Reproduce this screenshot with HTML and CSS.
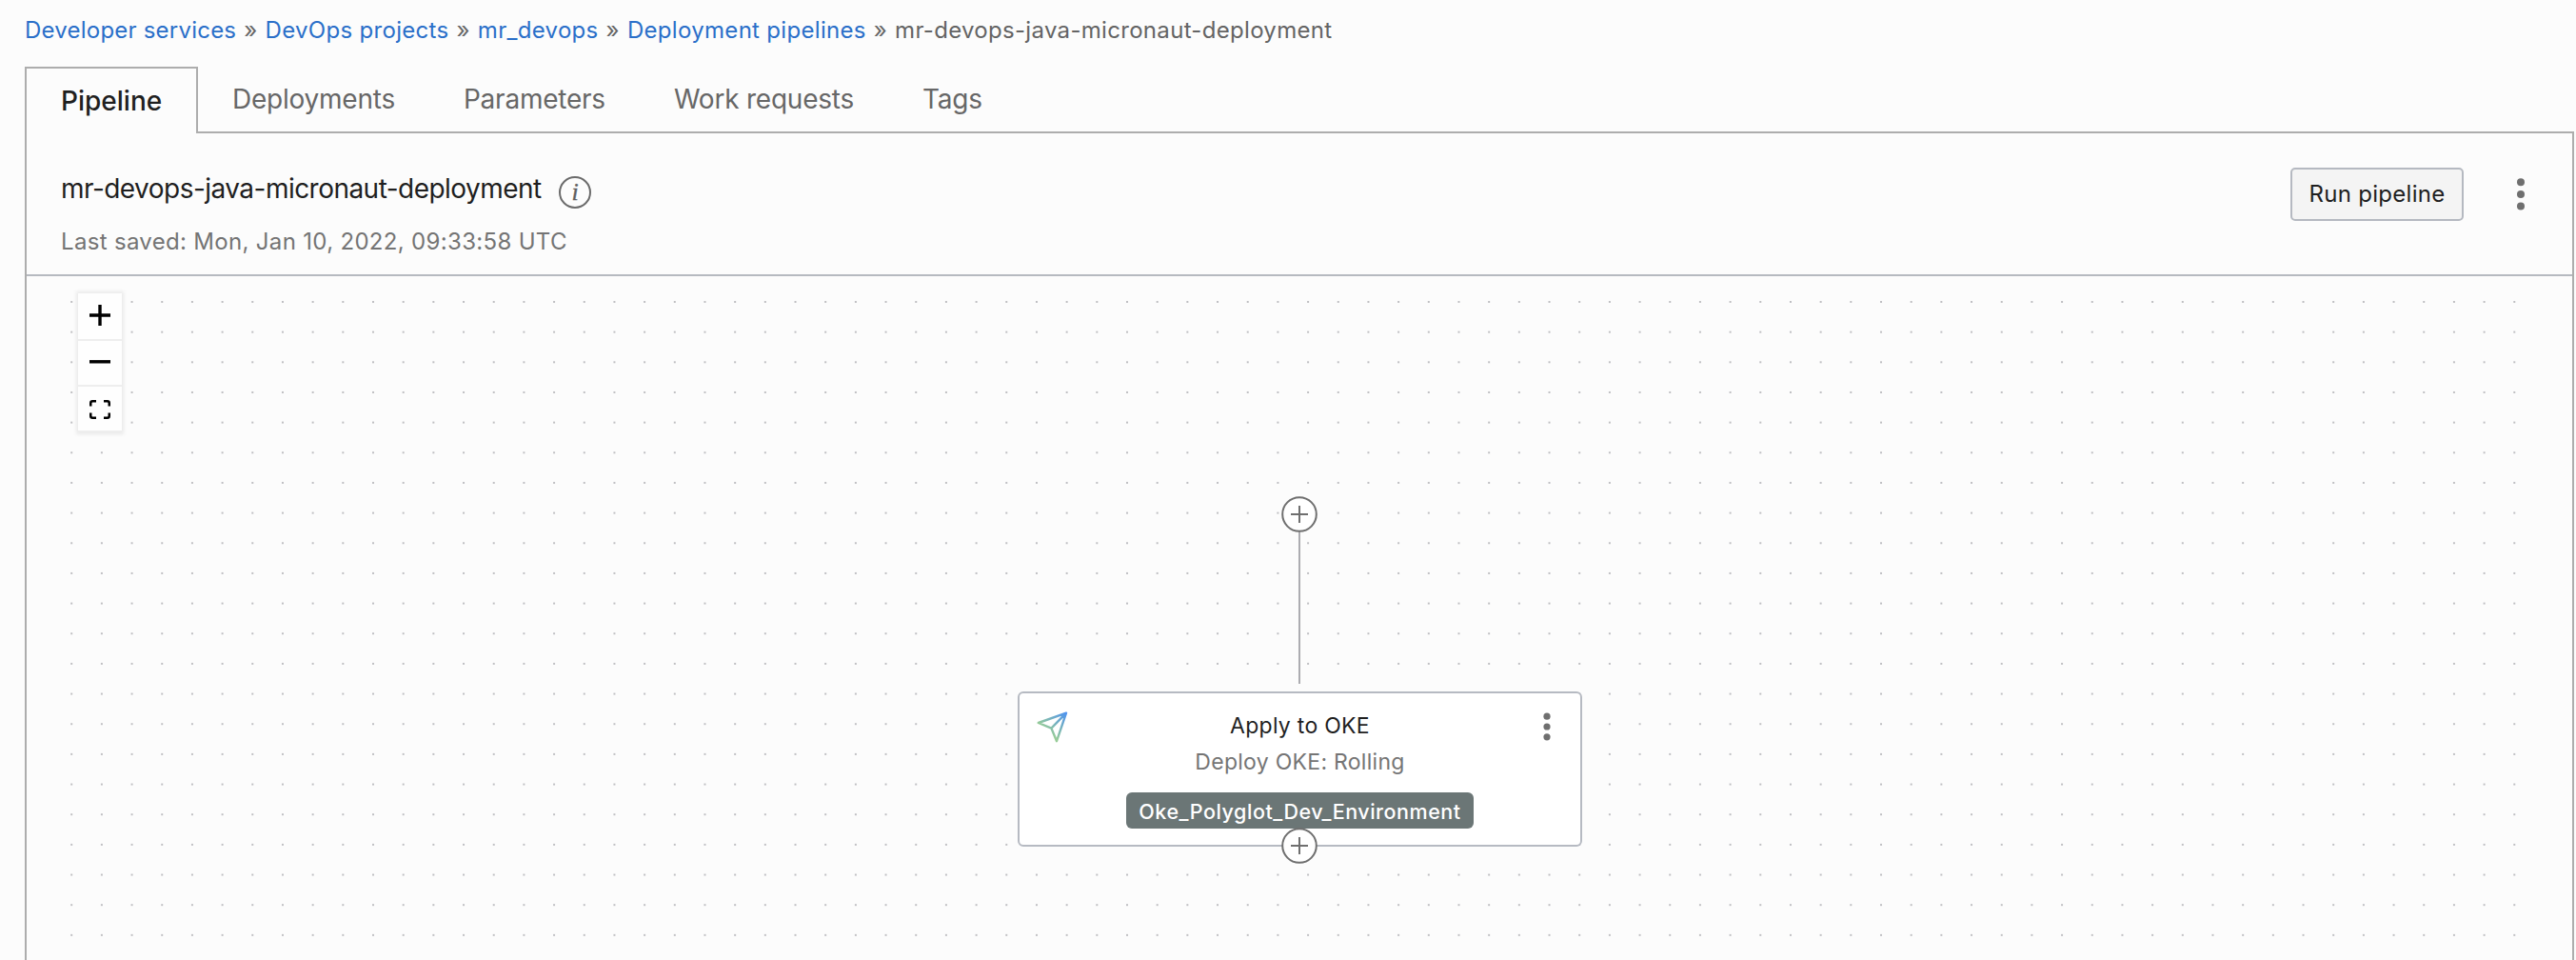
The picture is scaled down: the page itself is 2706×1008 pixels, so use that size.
FILE: index.html
```html
<!DOCTYPE html>
<html lang="en">
<head>
<meta charset="utf-8">
<title>mr-devops-java-micronaut-deployment</title>
<link rel="stylesheet" href="styles.css">
</head>
<body>
<nav class="breadcrumb">
  <a class="root">Developer services</a><span class="sep">»</span><a>DevOps projects</a><span class="sep">»</span><a>mr_devops</a><span class="sep">»</span><a>Deployment pipelines</a><span class="sep">»</span><span class="current">mr-devops-java-micronaut-deployment</span>
</nav>
<div class="tabs">
  <div class="tab active">Pipeline</div>
  <div class="tab">Deployments</div>
  <div class="tab">Parameters</div>
  <div class="tab">Work requests</div>
  <div class="tab">Tags</div>
</div>
<main class="panel">
  <header class="panel-header">
    <div class="heading">
      <div class="title-row">
        <h1>mr-devops-java-micronaut-deployment</h1>
        <svg class="info" width="36" height="36" viewBox="0 0 36 36"><circle cx="18" cy="18" r="16" fill="none" stroke="#6b6b6b" stroke-width="2"/><text x="18" y="25.5" text-anchor="middle" class="info-letter">i</text></svg>
      </div>
      <p class="saved">Last saved: Mon, Jan 10, 2022, 09:33:58 UTC</p>
    </div>
    <div class="actions">
      <button class="run">Run pipeline</button>
      <svg width="10" height="36" viewBox="0 0 10 36" fill="#6f6f6f"><circle cx="5" cy="5.2" r="4"/><circle cx="5" cy="18" r="4"/><circle cx="5" cy="30.6" r="4"/></svg>
    </div>
  </header>
  <section class="canvas">
    <svg class="dots" width="2588" height="718">
      <defs><pattern id="grid" x="-0.64" y="11.16" width="31.68" height="31.66" patternUnits="userSpaceOnUse"><circle cx="15.84" cy="15.84" r="1.05" fill="#b0b0b4"/></pattern></defs>
      <rect width="2588" height="718" fill="url(#grid)"/>
    </svg>
    <div class="controls">
      <div class="control zoom-in"><svg width="22" height="22" viewBox="0 0 22 22"><path d="M0 11h22M11 0v22" stroke="#000" stroke-width="3.4"/></svg></div>
      <div class="control zoom-out"><svg width="22" height="4" viewBox="0 0 22 4"><path d="M0 1.8h22" stroke="#000" stroke-width="3.4"/></svg></div>
      <div class="control fit"><svg width="22" height="20" viewBox="0 0 22 20" fill="none" stroke="#000" stroke-width="2.5"><path d="M1.25 6.5V3.2Q1.25 1.25 3.2 1.25H7M15 1.25h3.8q1.95 0 1.95 1.95v3.3M20.75 13.5v3.3q0 1.95-1.95 1.95H15M7 18.75H3.2q-1.95 0-1.95-1.95v-3.3"/></svg></div>
    </div>
    <div class="edge"></div>
    <div class="stage">
      <svg class="plane" width="34" height="34" viewBox="0 0 34 34"><defs><linearGradient id="sky" gradientUnits="userSpaceOnUse" x1="31" y1="3" x2="13" y2="24"><stop offset="0" stop-color="#4f93ee"/><stop offset="1" stop-color="#97cc97"/></linearGradient></defs><path d="M31 2.7 1.8 13 15.4 18.6 21 32.2ZM15.4 18.6 31 2.7" fill="none" stroke="url(#sky)" stroke-width="2.4" stroke-linejoin="round"/></svg>
      <div class="stage-body">
        <div class="stage-name">Apply to OKE</div>
        <div class="stage-kind">Deploy OKE: Rolling</div>
        <div class="badge">Oke_Polyglot_Dev_Environment</div>
      </div>
      <svg class="menu" width="8" height="30" viewBox="0 0 8 30" fill="#6f6f6f"><circle cx="4" cy="4.2" r="3.6"/><circle cx="4" cy="15" r="3.6"/><circle cx="4" cy="25.8" r="3.6"/></svg>
    </div>
    <svg class="add add-first" width="40" height="40" viewBox="0 0 40 40"><circle cx="20" cy="20" r="17.8" fill="#fff" stroke="#6f6f6f" stroke-width="2"/><path d="M11 20h18M20 11v18" stroke="#6f6f6f" stroke-width="2"/></svg>
    <svg class="add add-last" width="40" height="40" viewBox="0 0 40 40"><circle cx="20" cy="20" r="17.8" fill="#fff" stroke="#6f6f6f" stroke-width="2"/><path d="M11 20h18M20 11v18" stroke="#6f6f6f" stroke-width="2"/></svg>
  </section>
</main>
</body>
</html>
```
FILE: styles.css
```css
* { box-sizing: border-box; }
body {
  margin: 0;
  height: 1008px;
  overflow: hidden;
  display: flex;
  flex-direction: column;
  padding: 0 2px 0 26px;
  background: #fcfcfc;
  color: #1f1f1f;
  font-family: Inter, "Liberation Sans", sans-serif;
  font-size: 24px;
}
.breadcrumb {
  height: 70px;
  padding-top: 17px;
  line-height: 30px;
  letter-spacing: .31px;
  color: #646464;
  white-space: nowrap;
}
.breadcrumb a { color: #2a6fc9; }
.breadcrumb .root { letter-spacing: .22px; }
.sep { margin: 0 8px; }
.tabs { display: flex; height: 70px; position: relative; z-index: 1; margin-bottom: -2px; }
.tab {
  padding: 15px 36px 0;
  height: 68px;
  font-size: 28px;
  line-height: 38px;
  letter-spacing: -.23px;
  color: #676767;
  white-space: nowrap;
}
.tab.active {
  width: 182px;
  height: 70px;
  padding: 15px 34px 0 36px;
  border: 2px solid #adadad;
  border-bottom: 0;
  background: #fcfcfc;
  color: #1f1f1f;
  font-weight: 500;
  letter-spacing: 0;
}
.panel {
  flex: 1;
  display: flex;
  flex-direction: column;
  border: 2px solid #adadad;
  border-bottom: 0;
}
.panel-header {
  flex: none;
  height: 150px;
  display: flex;
  justify-content: space-between;
  padding: 36px 49px 0 36px;
  border-bottom: 2px solid #b6bac0;
}
.title-row { display: flex; gap: 17px; height: 54px; }
h1 {
  margin: 4px 0 0;
  font-size: 28px;
  font-weight: 400;
  line-height: 36px;
  letter-spacing: -.53px;
  white-space: nowrap;
}
.info { margin-top: 8px; }
.info-letter { font: italic 26px "Liberation Serif", serif; fill: #5f5f5f; stroke: #5f5f5f; stroke-width: .4px; }
.saved { margin: 9px 0 0; line-height: 30px; letter-spacing: .32px; color: #747474; }
.actions { display: flex; gap: 55px; height: 56px; align-items: center; }
.run {
  width: 182px;
  height: 56px;
  padding: 0 0 2px;
  border: 2px solid #b5b9c1;
  border-radius: 5px;
  background: #f4f4f4;
  color: #1f1f1f;
  font: 400 24px Inter, sans-serif;
  letter-spacing: .3px;
}
.canvas { position: relative; flex: 1; padding: 18px 0 0 54px; }
.dots { position: absolute; left: 32px; top: 0; }
.controls { position: relative; width: 46px; box-shadow: 0 0 4px 2px rgba(0,0,0,.08); }
.control {
  display: flex;
  align-items: center;
  justify-content: center;
  height: 48px;
  border-bottom: 2px solid #eee;
  background: #fefefe;
}
.zoom-in { height: 50px; padding-bottom: 2px; }
.zoom-out { padding-bottom: 2px; }
.fit { padding-top: 2px; }
.edge { position: absolute; left: 1336px; top: 268px; width: 2px; height: 160px; background: #acacb1; }
.stage {
  position: absolute;
  left: 1041px;
  top: 436px;
  width: 593px;
  height: 163px;
  display: grid;
  grid-template-columns: 1fr auto 1fr;
  align-items: start;
  padding: 0 18px;
  border: 2px solid #b6bac2;
  border-radius: 6px;
  background: #fff;
}
.plane { margin-top: 18px; }
.menu { margin: 20px 13px 0 0; justify-self: end; }
.stage-body {
  display: flex;
  flex-direction: column;
  align-items: center;
  padding-top: 17px;
  font-size: 23px;
  letter-spacing: .28px;
}
.stage-name { line-height: 34px; }
.stage-kind { margin-top: 4px; line-height: 34px; color: #757575; }
.badge {
  margin-top: 15px;
  height: 38px;
  padding: 0 13px;
  border-radius: 6px;
  background: #6b7676;
  color: #fff;
  font-size: 21.5px;
  font-weight: 500;
  line-height: 40px;
  letter-spacing: .53px;
  white-space: nowrap;
}
.add { position: absolute; left: 1316.5px; }
.add-first { top: 230px; }
.add-last { top: 578px; }
```
